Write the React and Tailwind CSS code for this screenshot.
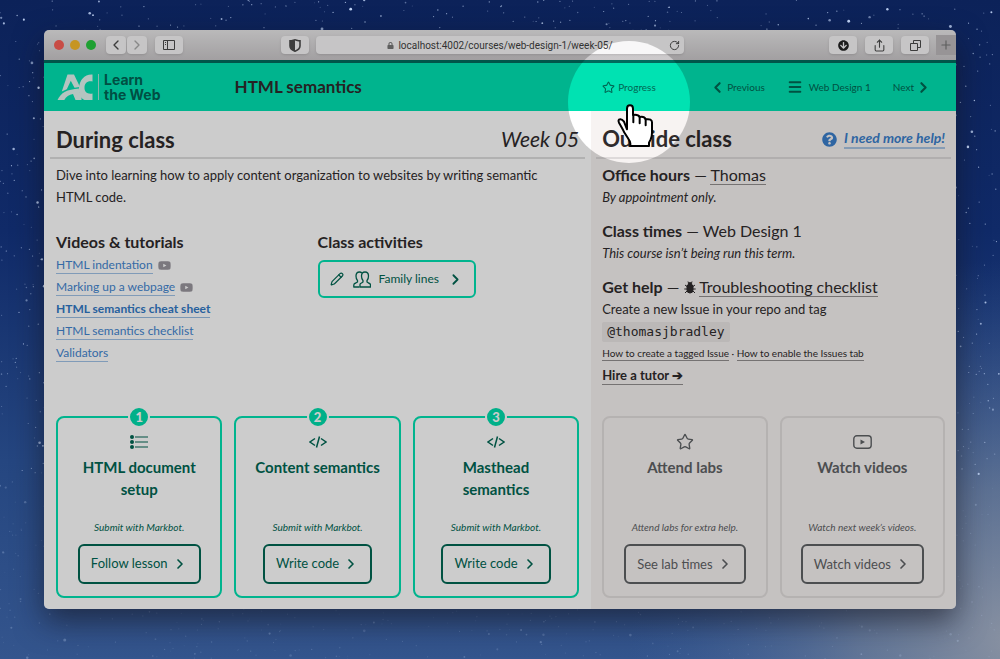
import React from "react";
import { ChevronLeft, ChevronRight, Star, Menu, RotateCw, Plus, Share, Copy, Pencil } from "lucide-react";
import { FaLock, FaQuestionCircle, FaArrowCircleDown, FaYoutube } from "react-icons/fa";

function makeStars(count) {
  let seed = 7;
  const next = () => {
    seed = (seed * 16807) % 2147483647;
    return seed / 2147483647;
  };
  return Array.from({ length: count }, () => {
    const size = Math.pow(next(), 9);
    return {
      x: next() * 1000,
      y: next() * 659,
      r: 0.6 + size * 0.9,
      o: Math.min(1, 0.2 + next() * 0.6 + size * 0.5),
    };
  });
}

const stars = makeStars(3200);

function Wallpaper() {
  return (
    <svg className="absolute inset-0 -z-10 h-full w-full" viewBox="0 0 1000 659" preserveAspectRatio="xMidYMid slice" aria-hidden="true">
      <defs>
        <linearGradient id="sky" x1="0" y1="0" x2="0" y2="1">
          <stop offset="0" stopColor="#0c2259" />
          <stop offset="0.35" stopColor="#102a68" />
          <stop offset="0.7" stopColor="#254680" />
          <stop offset="1" stopColor="#34558d" />
        </linearGradient>
        <radialGradient id="haze" cx="1010" cy="640" r="380" gradientUnits="userSpaceOnUse">
          <stop offset="0" stopColor="#9298a4" stopOpacity="0.9" />
          <stop offset="0.4" stopColor="#7f8b9e" stopOpacity="0.6" />
          <stop offset="1" stopColor="#4a6aa0" stopOpacity="0" />
        </radialGradient>
      </defs>
      <rect width="1000" height="659" fill="url(#sky)" />
      <rect width="1000" height="659" fill="url(#haze)" />
      {stars.map((s, i) => (
        <circle key={i} cx={s.x} cy={s.y} r={s.r} fill="#c3d6f7" opacity={s.y > 480 ? s.o * 0.3 : s.o} />
      ))}
    </svg>
  );
}

function ToolButton({ label, width = "w-7", children }) {
  return (
    <button type="button" aria-label={label} className={"flex h-[18px] items-center justify-center rounded bg-[#f8f7f8] text-[#4c4c4c] shadow-sm " + width}>
      {children}
    </button>
  );
}

function Toolbar() {
  return (
    <div className="flex h-[30px] items-center bg-linear-to-b from-[#e9e8e9] to-[#cbc8ca]">
      <div className="flex flex-1 items-center pl-[10px]">
        <div className="flex gap-[6px]">
          <span className="size-[10px] rounded-full bg-[#fb5f57]" />
          <span className="size-[10px] rounded-full bg-[#f8bb2c]" />
          <span className="size-[10px] rounded-full bg-[#27c83f]" />
        </div>
        <div className="mr-2 ml-[10px] flex gap-px">
          <ToolButton label="Back" width="w-5"><ChevronLeft size={16} /></ToolButton>
          <ToolButton label="Forward" width="w-5"><ChevronRight size={16} className="text-[#aaa]" /></ToolButton>
        </div>
        <ToolButton label="Sidebar">
          <svg width="12" height="10" viewBox="0 0 12 10" fill="none" stroke="currentColor"><path d="M.5.5h11v9H.5zM4.5.5v9M2 2.5h1M2 4.5h1" /></svg>
        </ToolButton>
        <div className="mr-[7px] ml-auto">
          <ToolButton label="Privacy report">
            <svg width="12" height="13" viewBox="0 0 12 13" fill="none" stroke="currentColor" strokeWidth="1.6"><path d="M1 1.8C3 1.8 5 .8 6 .8s3 1 5 1V7c0 2.500-2.500 4.300-5 5.200C3.500 11.300 1 9.500 1 7z" /><path d="M6 1v11C3.500 11 1 9.500 1 7V2z" fill="currentColor" stroke="none" /></svg>
          </ToolButton>
        </div>
      </div>
      <div className="relative mr-[10px] flex h-[18px] w-[368px] items-center justify-center gap-1 rounded bg-[#f8f7f8] font-[Roboto,sans-serif] text-[10px] text-[#3f3f3f] shadow-sm">
        <FaLock size={7} className="text-[#777]" />
        <span>localhost:4002/courses/web-design-1/week-05/</span>
        <button type="button" aria-label="Reload" className="absolute right-1"><RotateCw size={11} /></button>
      </div>
      <div className="flex flex-1 items-center justify-end gap-2">
        <ToolButton label="Downloads"><FaArrowCircleDown size={11} className="text-[#222]" /></ToolButton>
        <ToolButton label="Share"><Share size={13} /></ToolButton>
        <ToolButton label="Tabs">
          <svg width="11" height="11" viewBox="0 0 11 11" fill="none" stroke="currentColor"><path d="M.5 3.500h7v7h-7zM3.500 3.500v-3h7v7h-3" /></svg>
        </ToolButton>
        <button type="button" aria-label="New tab" className="-ml-px flex h-5 w-5 items-center justify-center self-end bg-[#bdbabc] text-[#777]"><Plus size={14} /></button>
      </div>
    </div>
  );
}

function Logo() {
  return (
    <a href="#home" className="flex items-center text-[#006354]">
      <svg width="36" height="27" viewBox="0 0 36 27" fill="#e2f5f0" aria-hidden="true">
        <path d="M10.500 .5h6.500l6 12.500-5.500 .8-3.700-7-4 8.500-5 2.200z" />
        <path d="M.5 26C4 18.500 10 15.500 22 14.500c-.5 2 .5 4.500 2.500 6.500v5h-6l-2.500-6c-4 .8-7 2.700-8.700 6z" />
        <path d="M35.500 .5v7c-5-1-8 1.500-8 6.500 0 4 3 6.500 8 5.500v6.500H27.500c-4-2-6-6-5.500-12C22.500 6 27.500 0 35.500 .5z" />
      </svg>
      <span className="mx-[5px] h-[26px] w-px bg-[#a9e5d7]" />
      <span className="font-[Inter,sans-serif] text-sm leading-[15px] font-bold"><span className="block">Learn</span><span className="block">the Web</span></span>
    </a>
  );
}

function Hand() {
  return (
    <svg className="absolute top-4 left-[3px]" width="60" height="60" viewBox="0 0 180 180" fill="#fff" stroke="#000" strokeWidth="6" strokeLinejoin="round" strokeLinecap="round" aria-hidden="true">
      <path d="M66 100V38q0-10 9-10t9 10V57q16-2 20 6 14-3 18 7 19-3 19 9v32q0 10-4 19l-5 10v10H76v-8q0-5-5-12l-14-22q-2-5-6-12l-9-16q-4-10 3-10 6-1 12 7z" />
      <path d="M85 57v22M104 63v19M122 70v18" />
    </svg>
  );
}

function Header() {
  return (
    <header className="grid grid-cols-[3fr_2fr] border-t-3 border-[#006b5d] bg-[#00e2b2]">
      <div className="flex h-12 items-center gap-[74px] pl-[13px]">
        <Logo />
        <h1 className="text-[17px] font-bold">HTML semantics</h1>
      </div>
      <nav className="flex items-center justify-between pr-6 pl-[11px] text-[10px] text-[#006753]">
        <a href="#progress" className="relative flex items-center gap-[3px]">
          <Star size={13} />
          Progress
          <span className="pointer-events-none absolute -top-[39px] left-1/2 z-10 size-[122px] -translate-x-1/2 rounded-full shadow-[0_0_10px_1200px_rgba(0,0,0,0.2)]" />
          <span className="pointer-events-none absolute inset-0 z-20"><Hand /></span>
        </a>
        <div className="flex gap-[22px]">
          <a href="#previous" className="flex items-center gap-px"><ChevronLeft size={17} strokeWidth={3} />Previous</a>
          <a href="#course" className="flex items-center gap-[6px]"><Menu size={16} strokeWidth={3} />Web Design 1</a>
          <a href="#next" className="flex items-center gap-px">Next<ChevronRight size={17} strokeWidth={3} /></a>
        </div>
      </nav>
    </header>
  );
}

function TextLink({ className = "", children }) {
  return <a href="#link" className={"border-b border-current/50 " + className}>{children}</a>;
}

const tutorials = [
  { title: "HTML indentation", video: true },
  { title: "Marking up a webpage", video: true },
  { title: "HTML semantics cheat sheet", strong: true },
  { title: "HTML semantics checklist" },
  { title: "Validators" },
];

const icons = {
  list: (
    <svg width="18" height="14" viewBox="0 0 18 14" fill="currentColor"><circle cx="2" cy="2" r="2" /><circle cx="2" cy="7" r="2" /><circle cx="2" cy="12" r="2" /><path d="M5 1.400h13v1.200H5zM5 6.400h13v1.200H5zM5 11.400h13v1.200H5z" /></svg>
  ),
  code: (
    <svg width="18" height="12" viewBox="0 0 18 12" fill="none" stroke="currentColor" strokeWidth="1.500"><path d="M6 2.500 1 6l5 3.500M12 2.500 17 6l-5 3.500M10.500 .5l-3 11" /></svg>
  ),
  star: <Star size={18} strokeWidth={1.8} />,
  video: (
    <svg width="19" height="14" viewBox="0 0 19 14" fill="none" stroke="currentColor" strokeWidth="1.400"><rect x=".8" y=".8" width="17.400" height="12.400" rx="3" /><path d="M7.500 4.500v5l4.500-2.500z" fill="currentColor" stroke="none" /></svg>
  ),
};

function Card({ number, icon, title, note, action, muted }) {
  return (
    <article className={"relative flex h-[182px] flex-1 flex-col items-center rounded-lg border-2 pb-3 text-center " + (muted ? "border-[#e3dfde] text-[#5f6265]" : "border-[#00e2b2] text-[#006753]")}>
      {number && (
        <span className="absolute -top-3 flex size-[22px] items-center justify-center rounded-full border-2 border-white bg-[#00dcac] text-[13px] leading-none font-black text-white">{number}</span>
      )}
      <div className="mt-[14px] flex h-5 items-center">{icons[icon]}</div>
      <h3 className="mt-1 px-2 text-[15px] leading-[22px] font-bold">{title}</h3>
      <p className="mt-auto text-[10px] leading-4 italic">{note}</p>
      <button type="button" className="mt-[9px] flex h-10 items-center gap-1 rounded-md border-2 border-current px-[11px] text-[13px]">
        {action}
        <ChevronRight size={16} strokeWidth={2.5} />
      </button>
    </article>
  );
}

function DuringClass() {
  return (
    <section className="flex flex-col bg-white px-3 pb-[11px]">
      <div className="-mx-[6px] flex h-12 items-center justify-between border-b-2 border-[#dedede] px-[6px] pt-[10px]">
        <h2 className="text-[22px] font-bold">During class</h2>
        <p className="text-[21px] italic">Week 05</p>
      </div>
      <p className="mt-[5px] text-[13px] leading-[22px]">Dive into learning how to apply content organization to websites by writing semantic <br />HTML code.</p>
      <div className="mt-[23px] grid grid-cols-2">
        <div>
          <h3 className="text-base leading-[22px] font-bold">Videos &amp; tutorials</h3>
          <ul className="pt-px text-xs leading-[22px] text-[#4385d0]">
            {tutorials.map((t) => (
              <li key={t.title} className="flex items-center gap-[5px]">
                <span className={t.strong ? "font-bold text-[#3179c6]" : ""}><TextLink className="pb-px">{t.title}</TextLink></span>
                {t.video && <FaYoutube size={13} className="text-[#9a969e]" />}
              </li>
            ))}
          </ul>
        </div>
        <div>
          <h3 className="text-base leading-[22px] font-bold">Class activities</h3>
          <button type="button" className="mt-[7px] flex h-[38px] items-center rounded-md border-2 border-[#00e2b2] px-[10px] text-xs text-[#006753]">
            <Pencil size={14} />
            <svg className="mr-2 ml-[9px]" width="18" height="17" viewBox="0 0 18 17" fill="none" stroke="currentColor" strokeWidth="1.300" strokeLinejoin="round">
              <path d="M7 16v-2.500q0-1 1.500-1.500l1.500-1V9.500Q8.500 8 8.500 5q0-4 3.500-4t3.500 4q0 3-1.500 4.500V11l1.500 1q2 .5 2 2v2z" />
              <path d="M6.500 16H.8v-2q0-1.500 2-2L4.500 11V9.500Q3 8 3 5q0-4 3.500-4 1.500 0 2.300 1" />
            </svg>
            Family lines
            <ChevronRight size={17} strokeWidth={2.5} className="ml-2" />
          </button>
        </div>
      </div>
      <div className="mt-auto flex gap-3 pt-[52px]">
        <Card number="1" icon="list" title={<>HTML document<br />setup</>} note="Submit with Markbot." action="Follow lesson" />
        <Card number="2" icon="code" title="Content semantics" note="Submit with Markbot." action="Write code" />
        <Card number="3" icon="code" title={<>Masthead<br />semantics</>} note="Submit with Markbot." action="Write code" />
      </div>
    </section>
  );
}

function Bug() {
  return (
    <svg className="inline align-[-1px]" width="12" height="13" viewBox="0 0 12 13" fill="currentColor" stroke="currentColor" aria-hidden="true">
      <path d="M3 4.500h6v4.500Q9 12 6 12T3 9zM4 4q0-2.500 2-2.500T8 4z" />
      <path d="M3 5.500 1 4M3 8H.3M3 10l-2 2M9 5.500 11 4M9 8h2.700M9 10l2 2M4.500 2 4 .5M7.500 2 8 .5" fill="none" />
    </svg>
  );
}

function OutsideClass() {
  return (
    <section className="flex flex-col bg-[#f7f3f2] px-[11px] pb-[11px] text-[13px] leading-[22px]">
      <div className="-mx-[6px] flex h-12 items-center justify-between border-b-2 border-[#dedada] px-[6px] pt-[10px]">
        <h2 className="text-[22px] font-bold">Outside class</h2>
        <div className="flex items-center gap-[7px] text-[#3b7fcb]">
          <FaQuestionCircle size={15} />
          <a href="#help" className="border-b-2 border-[#a8c3e2] text-sm leading-[18px] font-bold italic">I need more help!</a>
        </div>
      </div>
      <div className="mt-[5px]">
        <h3 className="text-base leading-[22px]"><b>Office hours</b> — <TextLink>Thomas</TextLink></h3>
        <p className="italic">By appointment only.</p>
      </div>
      <div className="mt-3">
        <h3 className="text-base leading-[22px]"><b>Class times</b> — Web Design 1</h3>
        <p className="italic">This course isn’t being run this term.</p>
      </div>
      <div className="mt-3">
        <h3 className="text-base leading-[22px]"><b>Get help</b> — <Bug /> <TextLink>Troubleshooting checklist</TextLink></h3>
        <p>Create a new Issue in your repo and tag</p>
        <p><code className="inline-block rounded-xs bg-[#eae6e5] px-[5px] font-['DejaVu_Sans_Mono',monospace] text-[13px] leading-5">@thomasjbradley</code></p>
        <p className="text-[10px] leading-[22px]"><TextLink className="pb-px">How to create a tagged Issue</TextLink> · <TextLink className="pb-px">How to enable the Issues tab</TextLink></p>
        <p className="font-bold"><TextLink className="pb-px">Hire a tutor ➔</TextLink></p>
      </div>
      <div className="mt-auto flex gap-3">
        <Card muted icon="star" title="Attend labs" note="Attend labs for extra help." action="See lab times" />
        <Card muted icon="video" title="Watch videos" note="Watch next week’s videos." action="Watch videos" />
      </div>
    </section>
  );
}

export default function App() {
  return (
    <div className="relative isolate min-h-screen overflow-hidden px-11 pt-[30px] pb-12 font-[Lato,sans-serif] text-[#2f2b2c]">
      <Wallpaper />
      <div className="relative isolate overflow-hidden rounded-[5px] shadow-[0_12px_30px_rgba(20,20,30,0.6)]">
        <Toolbar />
        <Header />
        <main className="grid grid-cols-[3fr_2fr]">
          <DuringClass />
          <OutsideClass />
        </main>
      </div>
    </div>
  );
}
